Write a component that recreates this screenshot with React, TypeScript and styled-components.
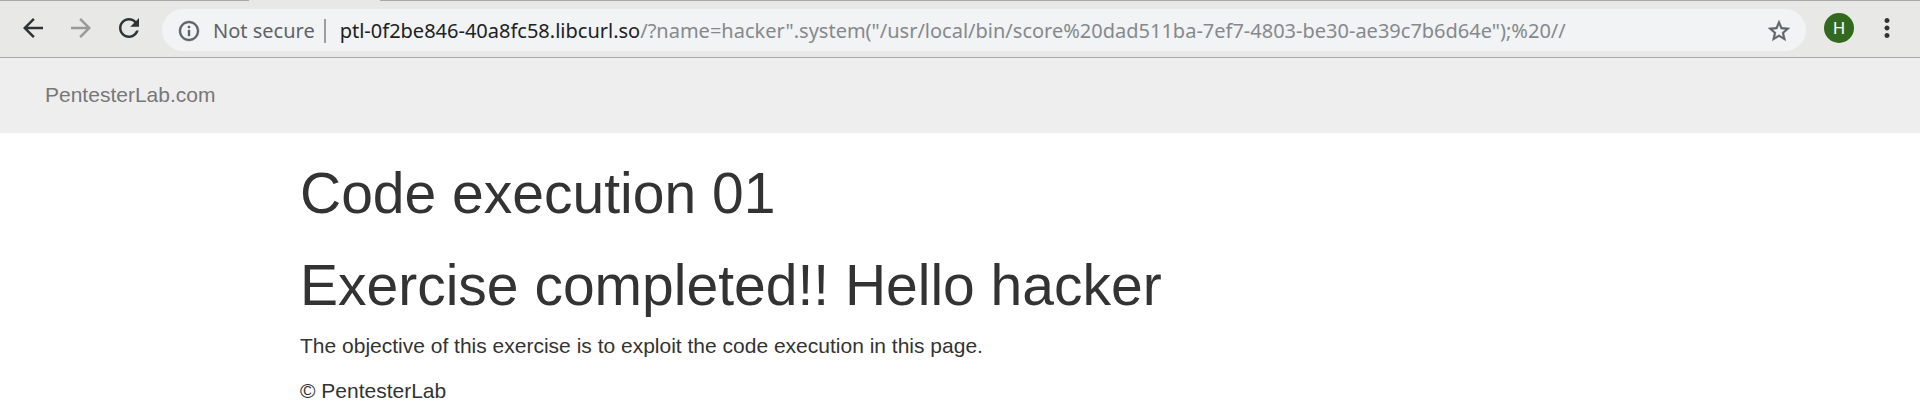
import React, { useState } from "react";
import styled, { createGlobalStyle } from "styled-components";

const GlobalStyle = createGlobalStyle`
  *, *::before, *::after {
    box-sizing: border-box;
  }
  body {
    margin: 0;
    background: #ffffff;
    color: #333333;
    font-family: "Liberation Sans", Arial, sans-serif;
    font-size: 21px;
    line-height: 30px;
  }
`;

const TabEdge = styled.div`
  display: grid;
  grid-template-columns: 249px 131px 1fr;
  height: 1px;
  background: #e8e8e6;
`;

const EdgeLine = styled.span<{ $open?: boolean }>`
  background: ${(p) => (p.$open ? "#e8e8e6" : "#a9a9a7")};
`;

const Toolbar = styled.div`
  display: flex;
  align-items: flex-start;
  gap: 18px;
  padding: 8px 18px 6px;
  background: #e8e8e6;
  border-bottom: 1px solid #a9a9a7;
`;

const IconButton = styled.button<{ $tone?: string; $size?: number }>`
  display: flex;
  flex: none;
  padding: 0;
  border: 0;
  background: none;
  color: ${(p) => p.$tone ?? "#2e3436"};

  svg {
    width: ${(p) => p.$size ?? 30}px;
    height: ${(p) => p.$size ?? 30}px;
    fill: currentColor;
  }
`;

const FieldButton = styled(IconButton)`
  svg {
    stroke: currentColor;
    stroke-width: 0.4;
  }
`;

const ToolGroup = styled.div`
  display: flex;
  gap: 18px;
  padding-top: 4px;
`;

const AddressBar = styled.form`
  display: flex;
  flex: 1;
  align-items: center;
  min-width: 0;
  height: 42px;
  padding: 2px 14px 0 15px;
  border-radius: 21px;
  background: #f1f3f5;
  font-family: "Noto Sans", "Open Sans", sans-serif;
  font-size: 20px;
  line-height: 28px;
`;

const Security = styled.span`
  padding: 0 9px 0 12px;
  color: #5f6368;
  white-space: nowrap;
`;

const Divider = styled.span`
  width: 2px;
  height: 24px;
  margin-right: 14px;
  background: #9a9da1;
`;

const UrlField = styled.input<{ $muted?: boolean }>`
  field-sizing: content;
  flex: ${(p) => (p.$muted ? "1 1 0" : "none")};
  min-width: 0;
  height: 28px;
  padding: 0;
  border: 0;
  outline: 0;
  background: none;
  color: ${(p) => (p.$muted ? "#85898d" : "#202124")};
  font: inherit;
`;

const Avatar = styled.button`
  width: 30px;
  height: 30px;
  padding: 0;
  border: 0;
  border-radius: 50%;
  background: #33691e;
  color: #ffffff;
  font-family: Roboto, sans-serif;
  font-size: 17px;
  line-height: 30px;
  text-align: center;
`;

const Navbar = styled.nav`
  padding: 22px 45px 23px;
  background: #eeeeee;
`;

const Brand = styled.a`
  display: inline-block;
  vertical-align: top;
  color: #777777;
  text-decoration: none;
`;

const Content = styled.main`
  max-width: 1320px;
  margin: 0 auto;
  padding-top: 30px;
`;

const Title = styled.h1`
  margin: 0 0 32px;
  font-size: 57px;
  font-weight: 400;
  line-height: 60px;
`;

const Result = styled(Title)`
  margin-bottom: 16px;
`;

const Text = styled.p`
  margin: 0 0 15px;
`;

const Footer = styled.footer`
  max-width: 1320px;
  margin: 0 auto;
`;

const paths = {
  back: "M20 11H7.83l5.59-5.59L12 4l-8 8 8 8 1.41-1.41L7.83 13H20v-2z",
  forward: "M12 4l-1.41 1.41L16.17 11H4v2h12.17l-5.58 5.59L12 20l8-8z",
  reload:
    "M17.65 6.35C16.2 4.9 14.21 4 12 4c-4.42 0-7.99 3.58-7.99 8s3.57 8 7.99 8c3.73 0 6.84-2.55 7.73-6h-2.08c-.82 2.33-3.04 4-5.65 4-3.31 0-6-2.69-6-6s2.69-6 6-6c1.66 0 3.14.69 4.22 1.78L13 11h7V4l-2.35 2.35z",
  info: "M11 17h2v-6h-2v6zm1-15C6.48 2 2 6.48 2 12s4.48 10 10 10 10-4.48 10-10S17.52 2 12 2zm0 18c-4.41 0-8-3.59-8-8s3.59-8 8-8 8 3.59 8 8-3.59 8-8 8zM11 9h2V7h-2v2z",
  star: "M22 9.24l-7.19-.62L12 2 9.19 8.63 2 9.24l5.46 4.73L5.82 21 12 17.27 18.18 21l-1.63-7.03L22 9.24zM12 15.4l-3.76 2.27 1-4.28-3.32-2.88 4.38-.38L12 6.1l1.71 4.04 4.38.38-3.32 2.88 1 4.28L12 15.4z",
  more: "M12 8c1.1 0 2-.9 2-2s-.9-2-2-2-2 .9-2 2 .9 2 2 2zm0 2c-1.1 0-2 .9-2 2s.9 2 2 2 2-.9 2-2-.9-2-2-2zm0 6c-1.1 0-2 .9-2 2s.9 2 2 2 2-.9 2-2-.9-2-2-2z",
};

const Icon = ({ name }: { name: keyof typeof paths }) => (
  <svg viewBox="0 0 24 24" aria-hidden="true">
    <path d={paths[name]} />
  </svg>
);

export default function App() {
  const [host, setHost] = useState("ptl-0f2be846-40a8fc58.libcurl.so");
  const [path, setPath] = useState(
    '/?name=hacker".system("/usr/local/bin/score%20dad511ba-7ef7-4803-be30-ae39c7b6d64e");%20//'
  );

  return (
    <>
      <GlobalStyle />
      <header>
        <TabEdge>
          <EdgeLine />
          <EdgeLine $open />
          <EdgeLine />
        </TabEdge>
        <Toolbar>
          <ToolGroup>
            <IconButton type="button" aria-label="Back">
              <Icon name="back" />
            </IconButton>
            <IconButton type="button" aria-label="Forward" $tone="#999b9b">
              <Icon name="forward" />
            </IconButton>
            <IconButton type="button" aria-label="Reload">
              <Icon name="reload" />
            </IconButton>
          </ToolGroup>
          <AddressBar onSubmit={(e) => e.preventDefault()}>
            <FieldButton type="button" aria-label="Site information" $tone="#5f6368" $size={24}>
              <Icon name="info" />
            </FieldButton>
            <Security>Not secure</Security>
            <Divider />
            <UrlField
              aria-label="Site address"
              spellCheck={false}
              value={host}
              onChange={(e) => setHost(e.target.value)}
            />
            <UrlField
              $muted
              aria-label="Path and query"
              spellCheck={false}
              value={path}
              onChange={(e) => setPath(e.target.value)}
            />
            <FieldButton type="button" aria-label="Bookmark this page" $tone="#5f6368" $size={26}>
              <Icon name="star" />
            </FieldButton>
          </AddressBar>
          <ToolGroup>
            <Avatar type="button" aria-label="Profile H">H</Avatar>
            <IconButton type="button" aria-label="Menu">
              <Icon name="more" />
            </IconButton>
          </ToolGroup>
        </Toolbar>
      </header>
      <Navbar>
        <Brand href="#">PentesterLab.com</Brand>
      </Navbar>
      <Content>
        <Title>Code execution 01</Title>
        <Result>Exercise completed!! Hello hacker</Result>
        <Text>The objective of this exercise is to exploit the code execution in this page.</Text>
      </Content>
      <Footer>© PentesterLab</Footer>
    </>
  );
}
